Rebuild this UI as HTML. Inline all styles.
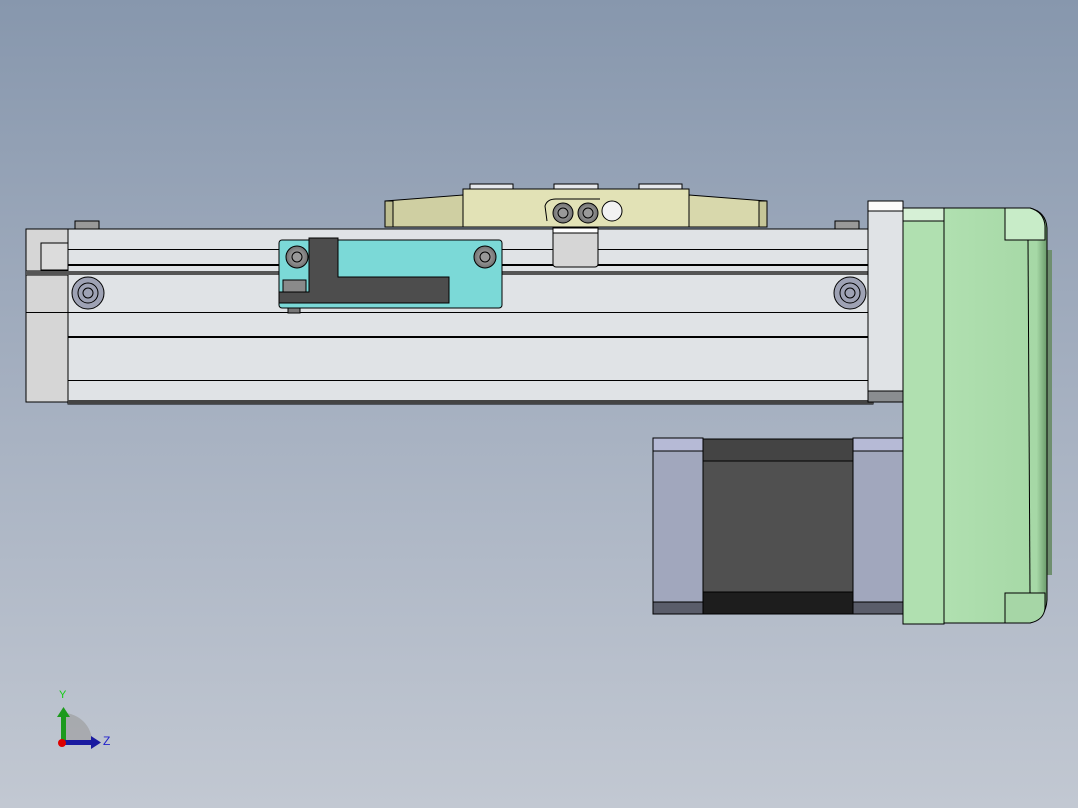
<!DOCTYPE html>
<html><head><meta charset="utf-8"><style>
html,body{margin:0;padding:0;width:1078px;height:808px;overflow:hidden}
body{background:linear-gradient(#8797ad 0%,#a3aebf 45%,#c2c8d2 100%)}
svg{position:absolute;left:0;top:0}
text{font-family:"Liberation Sans",sans-serif}
</style></head><body>
<svg width="1078" height="808" viewBox="0 0 1078 808">
<defs>
<linearGradient id="gr" x1="0" x2="1"><stop offset="0" stop-color="#b0e0b0"/><stop offset=".9" stop-color="#a6d8a6"/><stop offset="1" stop-color="#6a9a6a"/></linearGradient>
<radialGradient id="sc"><stop offset="0" stop-color="#b8b8b8"/><stop offset="1" stop-color="#707070"/></radialGradient>
</defs>
<g stroke="#000" stroke-width="1">
<rect x="470" y="184" width="43" height="5" fill="#e6e8ec"/>
<rect x="554" y="184" width="44" height="5" fill="#e6e8ec"/>
<rect x="639" y="184" width="43" height="5" fill="#e6e8ec"/>
<path d="M385 201 L463 195 L463 227 L385 227 Z" fill="#cfcfa2"/>
<path d="M689 195 L767 201 L767 227 L689 227 Z" fill="#d8d8ac"/>
<rect x="385" y="201" width="8" height="26" fill="#bdbd90"/>
<rect x="759" y="201" width="8" height="26" fill="#c6c698"/>
<rect x="463" y="189" width="226" height="38" fill="#e2e2b6"/>
<path d="M547 221 L545 206 Q547 199 556 199 L600 199" fill="none"/>
<circle cx="612" cy="211" r="10" fill="#f2f2f2"/>
<rect x="26" y="229" width="42" height="173" fill="#d6d6d6"/>
<rect x="41" y="243" width="27" height="27" fill="#dcdcdc"/>
<rect x="26" y="271" width="42" height="4" fill="#777"/>
<rect x="68" y="229" width="805" height="175" fill="#e0e3e6"/>
</g>
<g fill="#000">
<rect x="68" y="249" width="805" height="1"/>
<rect x="68" y="264" width="805" height="2"/>
<rect x="26" y="271" width="847" height="4" fill="#555"/>
<rect x="26" y="312" width="847" height="1"/>
<rect x="68" y="336" width="805" height="2"/>
<rect x="68" y="380" width="805" height="1"/>
<rect x="68" y="400" width="805" height="4" fill="#444"/>
</g>
<g stroke="#000">
<rect x="75" y="221" width="24" height="8" fill="#999"/>
<rect x="835" y="221" width="24" height="8" fill="#999"/>
<rect x="553" y="228" width="45" height="39" rx="3" fill="#d6d6d6"/>
<rect x="553" y="228" width="45" height="5" fill="#fff"/>
<circle cx="563" cy="213" r="10" fill="url(#sc)"/><circle cx="563" cy="213" r="5" fill="#999"/>
<circle cx="588" cy="213" r="10" fill="url(#sc)"/><circle cx="588" cy="213" r="5" fill="#999"/>
<circle cx="88" cy="293" r="16" fill="#9ea2b4"/><circle cx="88" cy="293" r="10" fill="none"/><circle cx="88" cy="293" r="5" fill="none"/>
<circle cx="850" cy="293" r="16" fill="#9ea2b4"/><circle cx="850" cy="293" r="10" fill="none"/><circle cx="850" cy="293" r="5" fill="none"/>
<rect x="279" y="240" width="223" height="68" rx="3" fill="#7bd9d7"/>
<path d="M309 238 H338 V277 H449 V303 H279 V292 H309 Z" fill="#4d4d4d"/>
<rect x="283" y="280" width="23" height="12" fill="#8a8a8a"/>
<rect x="288" y="308" width="12" height="5" fill="#777"/>
<circle cx="297" cy="257" r="11" fill="url(#sc)"/><circle cx="297" cy="257" r="5" fill="#999"/>
<circle cx="485" cy="257" r="11" fill="url(#sc)"/><circle cx="485" cy="257" r="5" fill="#999"/>
<rect x="868" y="201" width="35" height="201" fill="#e0e3e6"/>
<rect x="868" y="201" width="35" height="10" fill="#fbfbfb"/>
<rect x="868" y="391" width="35" height="11" fill="#8a8d90"/>
<rect x="1046" y="250" width="6" height="325" fill="#6f8f6f" stroke="none"/>
<path d="M944 208 H1030 Q1046 212 1047 228 V600 Q1046 618 1030 623 H944 Z" fill="url(#gr)"/>
<rect x="903" y="208" width="41" height="416" fill="#b0e0b0"/>
<rect x="903" y="208" width="41" height="13" fill="#d6f0d6"/>
<path d="M1005 208 H1030 Q1044 212 1045 226 V240 H1005 Z" fill="#c8ecc8"/>
<path d="M1005 593 H1045 V608 Q1044 620 1030 623 H1005 Z" fill="#a6d6a6"/>
<line x1="1028" y1="240" x2="1030" y2="593" stroke-width="1"/>
<rect x="653" y="438" width="50" height="176" fill="#a1a7bd"/>
<rect x="853" y="438" width="50" height="176" fill="#a1a7bd"/>
<rect x="653" y="438" width="50" height="13" fill="#b6bad6"/>
<rect x="853" y="438" width="50" height="13" fill="#b6bad6"/>
<rect x="653" y="602" width="50" height="12" fill="#5a5d6a"/>
<rect x="853" y="602" width="50" height="12" fill="#5a5d6a"/>
<rect x="703" y="439" width="150" height="175" fill="#505050"/>
<rect x="703" y="439" width="150" height="22" fill="#444"/>
<rect x="703" y="592" width="150" height="22" fill="#1d1d1d"/>
</g>
<path d="M63 742 V713 A29 29 0 0 1 92 742 Z" fill="#999" opacity=".6"/>
<rect x="61" y="715" width="5" height="28" fill="#1c9a1c"/>
<path d="M57 717 L63.5 707 L70 717 Z" fill="#1c9a1c"/>
<rect x="62" y="740" width="30" height="5" fill="#1a1aa0"/>
<path d="M91 736 L101 742.5 L91 749 Z" fill="#1a1aa0"/>
<circle cx="62" cy="743" r="4" fill="#d00"/>
<text x="59" y="698" font-size="11" fill="#1c1">Y</text>
<text x="103" y="745" font-size="12" fill="#22c">Z</text>
</svg>
</body></html>
